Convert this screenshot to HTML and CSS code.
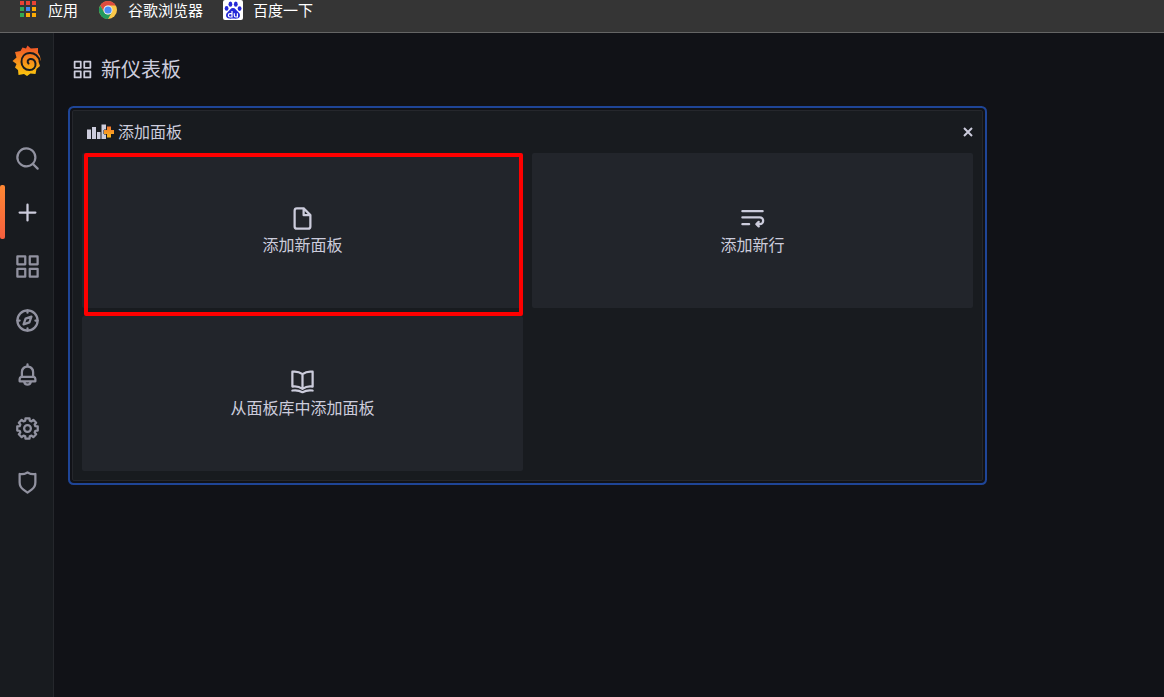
FILE: index.html
```html
<!DOCTYPE html>
<html lang="zh-CN">
<head>
<meta charset="utf-8">
<title>新仪表板</title>
<link rel="stylesheet" href="styles.css">
</head>
<body>
<nav class="bookmarks" aria-label="书签">
  <a class="bookmark" href="#apps">
    <svg class="bookmark-icon" viewBox="0 0 20 20" aria-hidden="true">
      <path fill="#ea4335" d="M2 1h4v4H2zM8 1h4v4H8zM14 1h4v4h-4z"/>
      <path fill="#34a853" d="M2 7h4v4H2zM2 13h4v4H2z"/>
      <path fill="#4285f4" d="M8 7h4v4H8z"/>
      <path fill="#fbab05" d="M14 7h4v4h-4zM8 13h4v4H8zM14 13h4v4h-4z"/>
    </svg>
    <span>应用</span>
  </a>
  <a class="bookmark" href="#chrome">
    <svg class="bookmark-icon" viewBox="0 0 20 20" aria-hidden="true">
      <circle cx="10" cy="10" r="9" fill="#fbc84a"/>
      <path fill="#dd4b3e" d="M2.2 5.5A9 9 0 0 1 17.8 5.5H10a4.5 4.5 0 0 0-3.900 6.700z"/>
      <path fill="#229a5d" d="M2.2 5.5A9 9 0 0 0 10 19l3.900-6.700a4.500 4.500 0 0 1-7.800 0z"/>
      <circle cx="10" cy="10" r="4.500" fill="#e8eef8"/>
      <circle cx="10" cy="10" r="3.600" fill="#4b8bf4"/>
    </svg>
    <span>谷歌浏览器</span>
  </a>
  <a class="bookmark" href="#baidu">
    <svg class="bookmark-icon" viewBox="0 0 20 20" aria-hidden="true">
      <rect width="20" height="20" rx="2" fill="#fff"/>
      <g fill="#2529d8">
        <ellipse cx="7.400" cy="4.200" rx="1.900" ry="2.600"/>
        <ellipse cx="12.800" cy="4.200" rx="1.900" ry="2.600"/>
        <ellipse cx="3.600" cy="8.400" rx="1.900" ry="2.400"/>
        <ellipse cx="16.600" cy="8.600" rx="1.900" ry="2.400"/>
        <path d="M10 8c2.400 0 3 2 4.500 3.300 1.700 1.500 3 3 2.300 5.200-.8 2.600-4 2.100-6.800 2.100s-6 .5-6.800-2.100c-.7-2.200.6-3.700 2.300-5.200C7 10 7.600 8 10 8z"/>
      </g>
      <path fill="none" stroke="#fff" stroke-width="1.200" d="M9 11v6H7a1.500 1.500 0 0 1 0-3.300h2M11.300 13.200v2.300q0 1.500 1.500 1.500h1.600v-3.800"/>
    </svg>
    <span>百度一下</span>
  </a>
</nav>
<div class="app">
  <aside class="sidebar">
    <a class="logo" href="#home" aria-label="Grafana">
      <svg viewBox="0 0 30 32" width="30" height="32" aria-hidden="true">
        <defs><linearGradient id="flame" x1="0" y1="1" x2="0" y2="0"><stop offset="0" stop-color="#fcc90d"/><stop offset="1" stop-color="#f0502a"/></linearGradient></defs>
        <path fill="url(#flame)" d="M15.500.5 18.800 3.500 26 3 26 7.500Q28.800 11 28.800 15.500L26.500 16.500 28 21 24.500 24 23.500 29 18.500 28.500 15 31 12 29 6.500 30 6 25 3 22.500 4.500 19 .5 16 4.500 12.500 3 7 8.500 6 10.500 2.500 14 3.500Z"/>
        <path class="logo-spiral" d="M28 17C27 11 22.500 8 18 8 12.500 8 9.500 12 9.500 17 9.500 21.500 13 25 17.500 25 21.500 25 24 22 23.500 18.500 23 15 20.500 13.500 18 14 15.500 14.500 15 17 16.500 18.500"/>
      </svg>
    </a>
    <nav class="menu" aria-label="主菜单">
      <a class="menu-item" href="#search" aria-label="搜索"><svg class="icon" viewBox="0 0 24 24"><path d="M21.710 20.290 18 16.610A9 9 0 1 0 16.610 18l3.680 3.680a1 1 0 0 0 1.420 0 1 1 0 0 0 0-1.390ZM11 18a7 7 0 1 1 7-7 7 7 0 0 1-7 7Z"/></svg></a>
      <a class="menu-item active" href="#create" aria-label="创建"><svg class="icon line" viewBox="0 0 24 24"><path d="M12 5v14M5 12h14"/></svg></a>
      <a class="menu-item" href="#dashboards" aria-label="仪表板"><svg class="icon" viewBox="0 0 24 24"><path id="apps-shape" d="M10,13H3a1,1,0,0,0-1,1v7a1,1,0,0,0,1,1h7a1,1,0,0,0,1-1V14A1,1,0,0,0,10,13ZM9,20H4V15H9ZM21,2H14a1,1,0,0,0-1,1v7a1,1,0,0,0,1,1h7a1,1,0,0,0,1-1V3A1,1,0,0,0,21,2ZM20,9H15V4h5Zm1,4H14a1,1,0,0,0-1,1v7a1,1,0,0,0,1,1h7a1,1,0,0,0,1-1V14A1,1,0,0,0,21,13Zm-1,7H15V15h5ZM10,2H3A1,1,0,0,0,2,3v7a1,1,0,0,0,1,1h7a1,1,0,0,0,1-1V3A1,1,0,0,0,10,2ZM9,9H4V4H9Z"/></svg></a>
      <a class="menu-item" href="#explore" aria-label="探索"><svg class="icon line" viewBox="0 0 24 24"><circle cx="12" cy="12" r="9"/><path d="M12 3v2M12 19v2M3 12h2M19 12h2M15.500 8.500 13.700 13.700 8.500 15.500 10.300 10.300Z"/></svg></a>
      <a class="menu-item" href="#alerting" aria-label="告警"><svg class="icon" viewBox="0 0 24 24"><path d="M18,13.180V10a6,6,0,0,0-5-5.910V3a1,1,0,0,0-2,0V4.090A6,6,0,0,0,6,10v3.180A3,3,0,0,0,4,16v2a1,1,0,0,0,1,1H8.140a4,4,0,0,0,7.720,0H19a1,1,0,0,0,1-1V16A3,3,0,0,0,18,13.180ZM8,10a4,4,0,0,1,8,0v3H8Zm4,10a2,2,0,0,1-1.720-1h3.440A2,2,0,0,1,12,20Zm6-3H6V16a1,1,0,0,1,1-1H17a1,1,0,0,1,1,1Z"/></svg></a>
      <a class="menu-item" href="#configuration" aria-label="配置"><svg class="icon line" viewBox="-12 -12 24 24"><circle r="3"/><path d="M-2-7-1.800-9.100H1.800L2-7 3.540-6.360 5.160-7.710 7.710-5.160 6.360-3.540 7-2 9.100-1.800V1.800L7 2 6.360 3.540 7.710 5.160 5.160 7.710 3.540 6.360 2 7 1.800 9.100H-1.800L-2 7-3.540 6.360-5.160 7.710-7.710 5.160-6.360 3.540-7 2-9.100 1.800V-1.800L-7-2-6.360-3.540-7.710-5.160-5.160-7.710-3.540-6.360Z"/></svg></a>
      <a class="menu-item" href="#admin" aria-label="服务器管理"><svg class="icon" viewBox="0 0 24 24"><path d="M19.630,3.650a1,1,0,0,0-.84-.2,8,8,0,0,1-6.220-1.270,1,1,0,0,0-1.140,0A8,8,0,0,1,5.210,3.450a1,1,0,0,0-.84.2A1,1,0,0,0,4,4.430v7.450a9,9,0,0,0,3.770,7.330l3.650,2.600a1,1,0,0,0,1.160,0l3.650-2.600A9,9,0,0,0,20,11.880V4.430A1,1,0,0,0,19.630,3.650ZM18,11.880a7,7,0,0,1-2.930,5.700L12,19.770,8.930,17.580A7,7,0,0,1,6,11.880V5.580a10,10,0,0,0,6-1.390,10,10,0,0,0,6,1.390Z"/></svg></a>
    </nav>
  </aside>
  <main class="content">
    <header class="page-header">
      <svg class="icon title-icon" viewBox="0 0 24 24" aria-hidden="true"><use href="#apps-shape"/></svg>
      <h1 class="title">新仪表板</h1>
    </header>
    <section class="panel" aria-labelledby="panel-title">
      <header class="panel-header">
        <svg class="panel-icon" viewBox="0 0 27 16" aria-hidden="true">
          <defs><linearGradient id="plus-fill" x1="0" y1="0" x2="0" y2="1"><stop offset="0" stop-color="#f2762e"/><stop offset="1" stop-color="#fbb91b"/></linearGradient></defs>
          <path fill="#ccccdc" d="M0 6.500h4V16H0zM5 4h4v12H5zM10 9h3.500v7H10zM14.500 1.500H19V16h-4.500z"/>
          <path class="plus" fill="url(#plus-fill)" d="M20 3.500h4V7h3v4h-3v3.500h-4V11h-3V7h3z"/>
        </svg>
        <h2 class="panel-title" id="panel-title">添加面板</h2>
        <button class="close" type="button" aria-label="关闭"><svg viewBox="0 0 10 10" width="10" height="10"><path d="M1 1 9 9M9 1 1 9"/></svg></button>
      </header>
      <div class="tiles">
        <button class="tile marked" type="button">
          <svg class="icon" viewBox="0 0 24 24" aria-hidden="true"><path d="M20,8.940a1.310,1.310,0,0,0-.06-.27l0-.09a1.070,1.070,0,0,0-.19-.28h0l-6-6h0a1.070,1.070,0,0,0-.28-.19l-.1,0A1.100,1.100,0,0,0,13.060,2H7A3,3,0,0,0,4,5V19a3,3,0,0,0,3,3H17a3,3,0,0,0,3-3V9S20,9,20,8.940ZM14,5.410,16.590,8H14ZM18,19a1,1,0,0,1-1,1H7a1,1,0,0,1-1-1V5A1,1,0,0,1,7,4h5V9a1,1,0,0,0,1,1h5Z"/></svg>
          <span>添加新面板</span>
        </button>
        <button class="tile" type="button">
          <svg class="icon line" viewBox="0 0 24 24" aria-hidden="true"><path d="M3 5.500h18M3 11h15.500a2.800 2.800 0 0 1 0 6H16M3 17h6M17.500 15 15.500 17 17.500 19"/></svg>
          <span>添加新行</span>
        </button>
        <button class="tile" type="button">
          <svg class="icon line" viewBox="0 0 24 24" aria-hidden="true"><path d="M12 5.500Q8 2.500 3 3.300v13.200q5-.8 9 2 4-2.800 9-2V3.300q-5-.8-9 2.200zM12 5.500v12.500M3 20q5-.8 9 1.500 4-2.300 9-1.500"/></svg>
          <span>从面板库中添加面板</span>
        </button>
      </div>
    </section>
  </main>
</div>
</body>
</html>
```
FILE: styles.css
```css
* { box-sizing: border-box; }

body {
  margin: 0;
  min-height: 100vh;
  display: flex;
  flex-direction: column;
  background: #111217;
  color: #ccccdc;
  font-family: "Noto Sans CJK SC", sans-serif;
  font-size: 16px;
  line-height: 24px;
}

a { color: inherit; text-decoration: none; }

button { font: inherit; color: inherit; border: 0; cursor: pointer; }

h1, h2 { margin: 0; font-weight: 400; }

.bookmarks {
  display: flex;
  gap: 20px;
  height: 33px;
  padding-left: 18px;
  background: #353535;
  border-bottom: 1px solid #656565;
}

.bookmark {
  display: flex;
  align-items: center;
  gap: 10px;
  height: 20px;
  color: #fff;
  font-size: 15px;
}

.bookmark-icon { width: 20px; height: 20px; }

.app { display: flex; flex: 1; }

.sidebar {
  flex: none;
  width: 54px;
  background: #181b1f;
  border-right: 1px solid #25272c;
  color: #9192a0;
}

.logo { display: block; height: 98px; padding: 12px; }

.logo svg { display: block; }

.logo-spiral {
  fill: none;
  stroke: #181b1f;
  stroke-width: 2;
  stroke-linecap: round;
}

.menu-item {
  display: flex;
  align-items: center;
  height: 54px;
  padding-left: 14px;
  position: relative;
}

.menu-item.active { color: #ccccdc; }

.menu-item.active::before {
  content: "";
  position: absolute;
  inset: 0 auto 0 0;
  width: 5px;
  border-radius: 2px;
  background: linear-gradient(#ff8833, #f55f3e);
}

.icon { width: 27px; height: 27px; fill: currentColor; }

.line {
  fill: none;
  stroke: currentColor;
  stroke-width: 2;
  stroke-linecap: round;
  stroke-linejoin: round;
}

.content { flex: 1; min-width: 0; padding: 0 18px; }

.page-header {
  display: flex;
  align-items: center;
  gap: 8px;
  height: 72px;
}

.title-icon { width: 21px; height: 21px; }

.title { font-size: 20px; line-height: 30px; }

.panel {
  max-width: 911px;
  margin-top: 5px;
  padding: 0 9px 9px;
  background: #181b1f;
  border: 1px solid #25272c;
  border-radius: 2px;
  box-shadow: 0 0 0 2px #111217, 0 0 0 4px #1f4597;
}

.panel-header {
  display: flex;
  align-items: center;
  gap: 4px;
  height: 42px;
  padding-left: 5px;
}

.panel-icon { width: 27px; height: 16px; margin-bottom: 2px; }

.plus { stroke: #181b1f; stroke-width: 1; paint-order: stroke; }

.panel-title { flex: 1; margin-bottom: 2px; font-size: 16px; }

.close { display: flex; padding: 4px 0; background: none; }

.close svg { fill: none; stroke: currentColor; stroke-width: 2; }

.tiles {
  display: grid;
  grid-template-columns: 1fr 1fr;
  gap: 8px 9px;
}

.tile {
  display: flex;
  flex-direction: column;
  align-items: center;
  justify-content: center;
  min-height: 155px;
  padding: 0;
  position: relative;
  background: #22252b;
  border-radius: 2px;
}

.marked::after {
  content: "";
  position: absolute;
  inset: 0 0 -8px 2px;
  border: 4px solid #fe0000;
  border-radius: 2px;
}
```
